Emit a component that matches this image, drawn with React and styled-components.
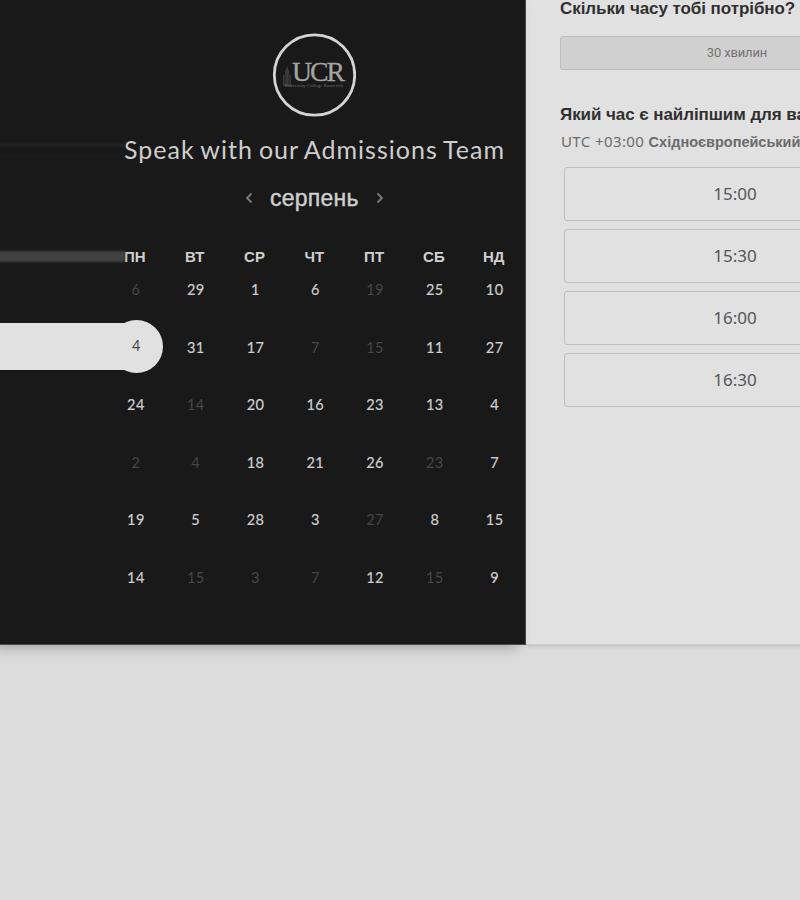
import React from 'react';
import styled, { createGlobalStyle } from 'styled-components';

const GlobalStyle = createGlobalStyle`
  * { box-sizing: border-box; }
  html, body { margin: 0; padding: 0; background: #dcdcdc; }
  body { font-family: Lato, 'Liberation Sans', sans-serif; }
`;

const Page = styled.div`
  width: 800px;
  height: 900px;
  overflow: hidden;
  background: #dcdcdc;
`;

const Scheduler = styled.main`
  display: flex;
  width: 914px;
  height: 644px;
`;

const CalendarPanel = styled.section`
  position: relative;
  flex: 0 0 526px;
  height: 645px;
  padding: 33px 1px 0 105px;
  background: #191919;
  border-right: 1px solid #4a4a4a;
  border-bottom: 1px solid #4a4a4a;
  box-shadow: -8px 3px 12px rgba(0, 0, 0, 0.26);
`;

const Streak = styled.div`
  position: absolute;
  left: -4px;
  top: ${(p) => p.$top}px;
  width: 129px;
  height: ${(p) => p.$height}px;
  background: ${(p) => p.$color};
  filter: blur(0.9px);
`;

const Logo = styled.svg`
  display: block;
  width: 84px;
  height: 84px;
  margin: 0 0 0 167px;
`;

const Title = styled.h1`
  margin: 14px 0 0 19px;
  height: 36px;
  font: 400 25px/36px Lato, sans-serif;
  letter-spacing: 1.02px;
  word-spacing: -1.4px;
  white-space: nowrap;
  color: #cecece;
`;

const MonthNav = styled.div`
  display: flex;
  align-items: center;
  height: 32px;
  margin: 15px 0 0 140px;
`;

const Chevron = styled.svg`
  width: 8px;
  height: 12px;
  fill: none;
  stroke: #7c7c7c;
  stroke-width: 1.8;
`;

const Month = styled.span`
  width: 89px;
  margin: 0 17px;
  font: 400 23px/32px 'Liberation Sans', sans-serif;
  letter-spacing: 0.25px;
  color: #d0d0d0;
  -webkit-text-stroke: 0.4px #d0d0d0;
`;

const Week = styled.div`
  display: grid;
  grid-template-columns: repeat(7, 59.8px);
  text-align: center;
`;

const Weekdays = styled(Week)`
  margin-top: 34px;
  height: 13.3px;
  font: 700 15px/18px 'Liberation Sans', sans-serif;
  color: #d0d0d0;
`;

const Days = styled(Week)`
  grid-auto-rows: 57.6px;
  align-items: center;
`;

const Day = styled.span`
  position: relative;
  padding-left: 2px;
  font: 400 14.5px/20px Lato, sans-serif;
  letter-spacing: 0.4px;
  color: ${(p) => (p.$muted ? '#474747' : '#cfcfcf')};
  -webkit-text-stroke: ${(p) => (p.$muted ? '0' : '0.2px')};
`;

const SelectedDay = styled(Day)`
  display: grid;
  place-items: center;
  width: 53px;
  height: 53px;
  padding: 0;
  margin-left: 5px;
  margin-top: -3px;
  isolation: isolate;
  border-radius: 50%;
  background: #e1e1e1;
  color: #454545;
  -webkit-text-stroke: 0;
  &::before {
    content: '';
    position: absolute;
    z-index: -1;
    left: -110px;
    top: 3px;
    width: 126px;
    height: 47px;
    background: #e1e1e1;
  }
`;

const TimePanel = styled.section`
  flex: 0 0 388px;
  height: 645px;
  padding: 0 0 0 34px;
  background: #e1e1e1;
  border-bottom: 1px solid #cdcdcd;
  box-shadow: 0 1px 4px rgba(0, 0, 0, 0.16);
`;

const Question = styled.h2`
  margin: ${(p) => p.$gap}px 0 0;
  height: 20px;
  font: 700 17px/20px 'Liberation Sans', sans-serif;
  letter-spacing: -0.07px;
  white-space: nowrap;
  color: #303030;
`;

const Duration = styled.button`
  display: block;
  width: 354px;
  height: 34px;
  margin: 17px 0 0;
  padding: 0 0 1px;
  border: 1px solid #bdbdbd;
  border-radius: 3px;
  background: #d0d0d0;
  font: 400 13px/31px Roboto, sans-serif;
  letter-spacing: -0.15px;
  color: #737373;
`;

const Timezone = styled.p`
  margin: 6px 0 0 1px;
  height: 20px;
  font: 400 15px/20px 'Noto Sans', sans-serif;
  letter-spacing: 0.4px;
  white-space: nowrap;
  color: #6b6b6b;
  b {
    font: 700 14.5px/20px 'Liberation Sans', sans-serif;
    letter-spacing: 0;
  }
`;

const Slots = styled.div`
  display: grid;
  gap: 8px;
  margin: 16px 0 0 4px;
  width: 342px;
`;

const Slot = styled.button`
  height: 54px;
  padding: 0;
  border: 1px solid #bfbfbf;
  border-radius: 3px;
  background: #e1e1e1;
  font: 400 17px/50px 'Noto Sans', sans-serif;
  color: #555;
`;

const weekdays = ['ПН', 'ВТ', 'СР', 'ЧТ', 'ПТ', 'СБ', 'НД'];

const days = [
  [6, 1], [29], [1], [6], [19, 1], [25], [10],
  [4, 0, 1], [31], [17], [7, 1], [15, 1], [11], [27],
  [24], [14, 1], [20], [16], [23], [13], [4],
  [2, 1], [4, 1], [18], [21], [26], [23, 1], [7],
  [19], [5], [28], [3], [27, 1], [8], [15],
  [14], [15, 1], [3, 1], [7, 1], [12], [15, 1], [9],
];

const times = ['15:00', '15:30', '16:00', '16:30'];

function UcrLogo() {
  return (
    <Logo viewBox="0 0 84 84" aria-label="UCR">
      <circle cx="42.5" cy="42" r="40.2" fill="none" stroke="#d4d4d4" strokeWidth="2.8" />
      <path d="M11 53V42h2v-3l2-6 2 6v3h2v11z" fill="#3a3a3a" />
      <path d="M13 42v10M17 42v10" stroke="#222" strokeWidth="1" />
      <text x="20" y="48" fontFamily="Liberation Serif, serif" fontSize="28" textLength="51" lengthAdjust="spacingAndGlyphs" letterSpacing="-2" fill="#a4a4a4" stroke="#a4a4a4" strokeWidth="0.3">UCR</text>
      <text x="13" y="54" fontFamily="Liberation Serif, serif" fontSize="4.4" textLength="58" fill="#808080">University College Roosevelt</text>
    </Logo>
  );
}

function Calendar() {
  return (
    <CalendarPanel>
      <Streak $top={143} $height={4} $color="#232323" />
      <Streak $top={155} $height={2} $color="#202020" />
      <Streak $top={251} $height={11} $color="#424242" />
      <UcrLogo />
      <Title>Speak with our Admissions Team</Title>
      <MonthNav>
        <Chevron viewBox="0 0 8 12"><path d="M6.5 1.5 2 6l4.5 4.5" /></Chevron>
        <Month>серпень</Month>
        <Chevron viewBox="0 0 8 12"><path d="M1.5 1.5 6 6l-4.5 4.5" /></Chevron>
      </MonthNav>
      <Weekdays>
        {weekdays.map((d) => <span key={d}>{d}</span>)}
      </Weekdays>
      <Days>
        {days.map(([n, muted, selected], i) =>
          selected ? <SelectedDay key={i}>{n}</SelectedDay> : <Day key={i} $muted={!!muted}>{n}</Day>
        )}
      </Days>
    </CalendarPanel>
  );
}

function TimePicker() {
  return (
    <TimePanel>
      <Question $gap={-1}>Скільки часу тобі потрібно?</Question>
      <Duration>30 хвилин</Duration>
      <Question $gap={35}>Який час є найліпшим для вас?</Question>
      <Timezone>UTC +03:00 <b>Східноєвропейський час</b></Timezone>
      <Slots>
        {times.map((t) => <Slot key={t}>{t}</Slot>)}
      </Slots>
    </TimePanel>
  );
}

export default function App() {
  return (
    <Page>
      <GlobalStyle />
      <Scheduler>
        <Calendar />
        <TimePicker />
      </Scheduler>
    </Page>
  );
}
